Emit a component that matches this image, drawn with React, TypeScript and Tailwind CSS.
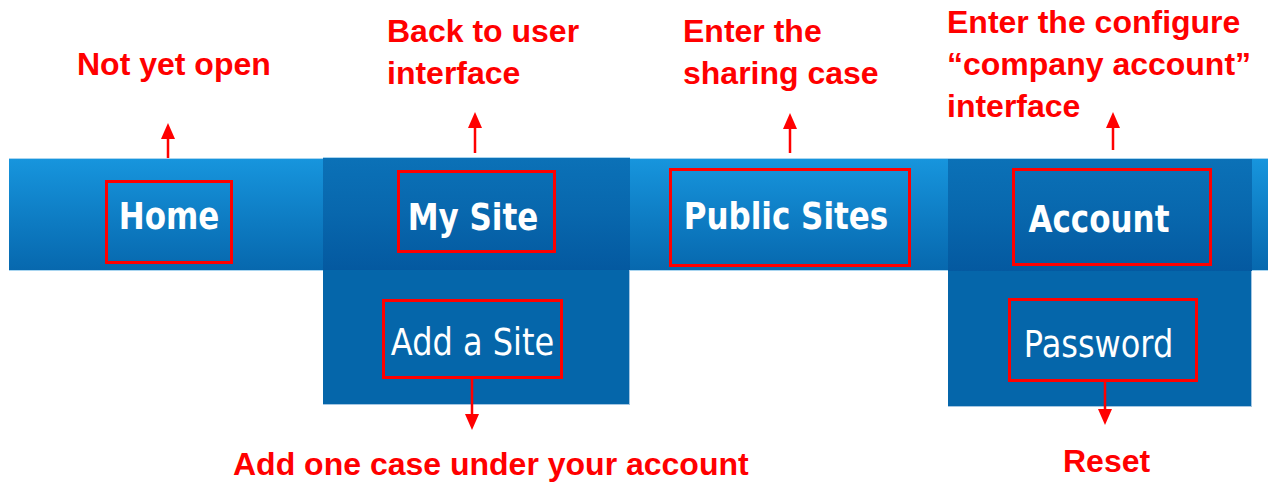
import type { ReactNode } from "react";

const note = "font-['Liberation_Sans',Arial,sans-serif] font-bold text-[32px] leading-[42px] text-[#ff0000] whitespace-nowrap";
const navText = "block font-['DejaVu_Sans',Verdana,sans-serif] font-bold text-[31px] leading-none text-white scale-y-[1.18]";
const subText = "block font-['DejaVu_Sans',Verdana,sans-serif] text-[32px] leading-none text-white scale-y-[1.15]";

const lightTab = "h-[113px] border-y border-[#a8d5f0] bg-linear-to-b from-[#1795dd] to-[#0768ae] flex items-start";
const darkTab = "h-[113px] border-t border-[#a8d5f0] bg-linear-to-b from-[#0b71b7] via-[#0867ad] to-[#0459a0] flex items-start";
const dropdown = "h-[136px] bg-[#0566aa] border-r border-b border-[#a4c6e2] flex items-start";

function UpArrow({ h, className }: { h: number; className?: string }) {
  return (
    <svg width="16" height={h} viewBox={`0 0 16 ${h}`} className={className}>
      <polygon points="1,16 8,0 15,16" fill="#ff0000" />
      <rect x="6.75" y="15" width="2.5" height={h - 15} fill="#ff0000" />
    </svg>
  );
}

function DownArrow({ h, className }: { h: number; className?: string }) {
  return (
    <svg width="16" height={h} viewBox={`0 0 16 ${h}`} className={className}>
      <rect x="6.75" y="0" width="2.5" height={h - 15} fill="#ff0000" />
      <polygon points={`1,${h - 16} 8,${h} 15,${h - 16}`} fill="#ff0000" />
    </svg>
  );
}

function Marked({ className, children }: { className: string; children: ReactNode }) {
  return (
    <div className={`relative border-[3px] border-[#ff0000] flex items-center justify-center shrink-0 ${className}`}>
      {children}
    </div>
  );
}

export default function App() {
  return (
    <div className="w-[1268px] h-[485px] overflow-hidden bg-white flex pl-[9px]">
      {/* Home */}
      <div className="w-[314px] flex flex-col shrink-0">
        <div className="h-[158px] flex flex-col">
          <p className={`${note} ml-[68px] mt-[43px]`}>Not yet open</p>
          <UpArrow h={35} className="ml-[151px] mt-[38px]" />
        </div>
        <div className={lightTab}>
          <Marked className="ml-[96px] mt-[21px] w-[128px] h-[84px] pb-[12px]">
            <span className={navText}>Home</span>
          </Marked>
        </div>
      </div>

      {/* My Site */}
      <div className="w-[307px] flex flex-col shrink-0">
        <div className="h-[158px] flex flex-col">
          <p className={`${note} ml-[64px] mt-[10px]`}>
            Back to user
            <br />
            interface
          </p>
          <UpArrow h={41} className="ml-[144px] mt-[18px]" />
        </div>
        <div className={darkTab}>
          <Marked className="ml-[74px] mt-[12px] w-[159px] h-[83px] pt-[12px] pr-[7px]">
            <span className={navText}>My Site</span>
          </Marked>
        </div>
        <div className={dropdown}>
          <Marked className="ml-[59px] mt-[29px] w-[181px] h-[80px] pt-[7px]">
            <span className={subText}>Add a Site</span>
            <DownArrow h={54} className="absolute top-full left-[79px]" />
          </Marked>
        </div>
        <p className={`${note} mt-[38px] ml-[-90px]`}>Add one case under your account</p>
      </div>

      {/* Public Sites */}
      <div className="w-[318px] flex flex-col shrink-0">
        <div className="h-[158px] flex flex-col">
          <p className={`${note} ml-[53px] mt-[10px]`}>
            Enter the
            <br />
            sharing case
          </p>
          <UpArrow h={40} className="ml-[152px] mt-[19px]" />
        </div>
        <div className={lightTab}>
          <Marked className="ml-[39px] mt-[9px] w-[242px] h-[99px] pr-[8px] pb-[2px]">
            <span className={navText}>Public Sites</span>
          </Marked>
        </div>
      </div>

      {/* Account */}
      <div className="w-[304px] flex flex-col shrink-0">
        <div className="h-[158px] flex flex-col">
          <p className={`${note} ml-[-1px] mt-[1px]`}>
            Enter the configure
            <br />
            “company account”
            <br />
            interface
          </p>
          <UpArrow h={38} className="ml-[157px] mt-[-15px]" />
        </div>
        <div className={darkTab}>
          <Marked className="ml-[64px] mt-[9px] w-[200px] h-[98px] pt-[5px] pr-[26px]">
            <span className={navText}>Account</span>
          </Marked>
        </div>
        <div className={dropdown}>
          <Marked className="ml-[60px] mt-[27px] w-[190px] h-[84px] pt-[7px] pr-[9px]">
            <span className={subText}>Password</span>
            <DownArrow h={46} className="absolute top-full left-[86px]" />
          </Marked>
        </div>
        <p className={`${note} mt-[33px] ml-[115px]`}>Reset</p>
      </div>

      {/* rest of bar */}
      <div className="flex-1 flex flex-col">
        <div className="h-[158px]" />
        <div className={lightTab} />
      </div>
    </div>
  );
}
